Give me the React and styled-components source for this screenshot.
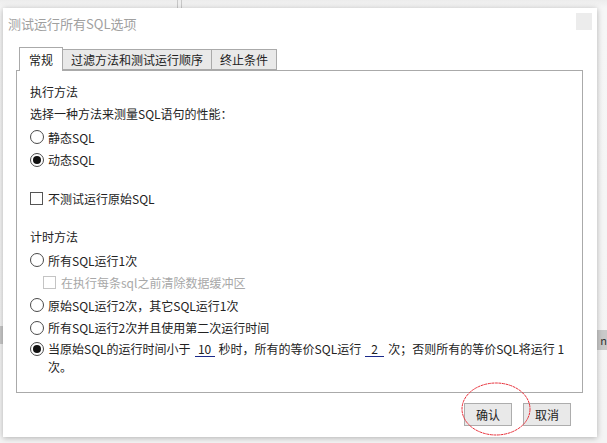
import React from 'react';
import styled, { createGlobalStyle } from 'styled-components';

const GlobalStyle = createGlobalStyle`
  html, body {
    margin: 0;
    padding: 0;
    background: #f4f4f4;
  }
  body {
    font-family: "Noto Sans CJK SC", "Noto Sans", sans-serif;
    font-size: 12px;
    color: #222;
  }
`;

const Desktop = styled.div`
  position: relative;
  width: 607px;
  height: 443px;
  overflow: hidden;
  background: linear-gradient(#ececec, #f6f6f6 8px, #f4f4f4);
  padding: 8px 10px 0 3px;
  box-sizing: border-box;
`;

const BackLine = styled.div`
  position: absolute;
  top: 0;
  left: ${(p) => p.x}px;
  width: 1px;
  height: 8px;
  background: #c8c8c8;
`;

const BackStrip = styled.div`
  position: absolute;
  top: ${(p) => p.y}px;
  left: ${(p) => p.x}px;
  width: ${(p) => p.w}px;
  height: ${(p) => p.h}px;
  background: #c9c9c9;
  color: #333;
  font-size: 11px;
  line-height: ${(p) => p.h}px;
  overflow: hidden;
  text-align: right;
`;

const Dialog = styled.div`
  position: relative;
  width: 594px;
  height: 429px;
  background: #fff;
  box-shadow: 0 1px 6px rgba(0, 0, 0, 0.28);
  display: flex;
  flex-direction: column;
  box-sizing: border-box;
`;

const TitleBar = styled.div`
  height: 30px;
  display: flex;
  align-items: center;
  justify-content: space-between;
  padding: 0 5px 0 5px;
`;

const Title = styled.span`
  color: #a0a0a0;
  font-size: 13px;
`;

const CloseBox = styled.div`
  width: 16px;
  height: 17px;
  background: #ececec;
  margin-top: -4px;
`;

const Body = styled.div`
  padding: 9px 14px 0 13px;
  display: flex;
  flex-direction: column;
`;

const TabRow = styled.div`
  display: flex;
  align-items: flex-end;
  height: 23px;
  padding-left: 3px;
  position: relative;
  z-index: 1;
`;

const Tab = styled.div`
  height: ${(p) => (p.active ? 24 : 21)}px;
  padding: 0 ${(p) => (p.active ? 9 : 8)}px;
  box-sizing: border-box;
  border: 1px solid #aaa;
  border-bottom: ${(p) => (p.active ? 'none' : '1px solid #aaa')};
  border-left: ${(p) => (p.first || p.active ? '1px solid #aaa' : 'none')};
  background: ${(p) => (p.active ? '#fff' : '#e9e9e9')};
  margin-bottom: ${(p) => (p.active ? -1 : 0)}px;
  display: flex;
  align-items: center;
  font-size: 12px;
  color: #222;
`;

const Panel = styled.div`
  border: 1px solid #aaa;
  height: 323px;
  box-sizing: border-box;
  padding: 10px 10px 0 13px;
  display: flex;
  flex-direction: column;
`;

const Heading = styled.div`
  height: 22px;
  line-height: 22px;
  margin-top: ${(p) => p.gap || 0}px;
`;

const Row = styled.label`
  display: flex;
  align-items: center;
  height: 22.6px;
  margin-top: ${(p) => p.gap || 0}px;
  padding-left: ${(p) => p.indent || 0}px;
  color: ${(p) => (p.disabled ? '#a8a8a8' : '#222')};
`;

const Radio = styled.span`
  width: 12px;
  height: 12px;
  border: 1px solid #4a4a4a;
  border-radius: 50%;
  margin-right: 4px;
  display: flex;
  align-items: center;
  justify-content: center;
  flex-shrink: 0;
  &::after {
    content: '';
    width: 8px;
    height: 8px;
    border-radius: 50%;
    background: ${(p) => (p.checked ? '#111' : 'transparent')};
  }
`;

const Check = styled.span`
  width: 11px;
  height: 11px;
  border: 1px solid ${(p) => (p.disabled ? '#c4c4c4' : '#555')};
  margin-right: 5px;
  flex-shrink: 0;
`;

const LongOption = styled.div`
  display: flex;
  align-items: flex-start;
  margin-top: 1px;
`;

const RadioWrap = styled.div`
  height: 18px;
  display: flex;
  align-items: center;
`;

const LongText = styled.div`
  line-height: 18px;
  width: 530px;
`;

const Field = styled.span`
  display: inline-block;
  width: ${(p) => p.w}px;
  border-bottom: 1px solid #1b2a8a;
  text-align: center;
  line-height: 14px;
  margin: 0 4px;
`;

const Footer = styled.div`
  display: flex;
  justify-content: flex-end;
  gap: 11px;
  padding: 10px 12px 0 0;
`;

const Button = styled.div`
  width: ${(p) => p.w}px;
  height: 23px;
  box-sizing: border-box;
  border: 1px solid #adadad;
  background: #e9e9e9;
  display: flex;
  align-items: center;
  justify-content: center;
  font-size: 12px;
  color: #222;
`;

const Annotation = styled.svg`
  position: absolute;
  left: 460px;
  top: 381px;
  pointer-events: none;
`;

export default function App() {
  return (
    <>
      <GlobalStyle />
      <Desktop>
        <BackLine x={177} />
        <BackLine x={181} />
        <BackStrip x={0} y={326} w={4} h={18} />
        <BackStrip x={597} y={330} w={10} h={20}>n</BackStrip>
        <Dialog>
          <TitleBar>
            <Title>测试运行所有SQL选项</Title>
            <CloseBox />
          </TitleBar>
          <Body>
            <TabRow>
              <Tab active first>常规</Tab>
              <Tab>过滤方法和测试运行顺序</Tab>
              <Tab>终止条件</Tab>
            </TabRow>
            <Panel>
              <Heading>执行方法</Heading>
              <Heading>选择一种方法来测量SQL语句的性能：</Heading>
              <Row gap={1}><Radio />静态SQL</Row>
              <Row><Radio checked />动态SQL</Row>
              <Row gap={16}><Check />不测试运行原始SQL</Row>
              <Heading gap={16}>计时方法</Heading>
              <Row gap={1}><Radio />所有SQL运行1次</Row>
              <Row indent={13} disabled><Check disabled />在执行每条sql之前清除数据缓冲区</Row>
              <Row><Radio />原始SQL运行2次，其它SQL运行1次</Row>
              <Row><Radio />所有SQL运行2次并且使用第二次运行时间</Row>
              <LongOption>
                <RadioWrap><Radio checked /></RadioWrap>
                <LongText>
                  当原始SQL的运行时间小于<Field w={20}>10</Field>秒时，所有的等价SQL运行<Field w={19}>2</Field>次；否则所有的等价SQL将运行 1 次。
                </LongText>
              </LongOption>
            </Panel>
            <Footer>
              <Button w={48}>确认</Button>
              <Button w={48}>取消</Button>
            </Footer>
          </Body>
        </Dialog>
        <Annotation width="72" height="56" viewBox="0 0 72 56">
          <ellipse cx="36" cy="28" rx="34" ry="26" fill="none" stroke="#e8303a" strokeWidth="1" strokeDasharray="3 0.6" />
        </Annotation>
      </Desktop>
    </>
  );
}
